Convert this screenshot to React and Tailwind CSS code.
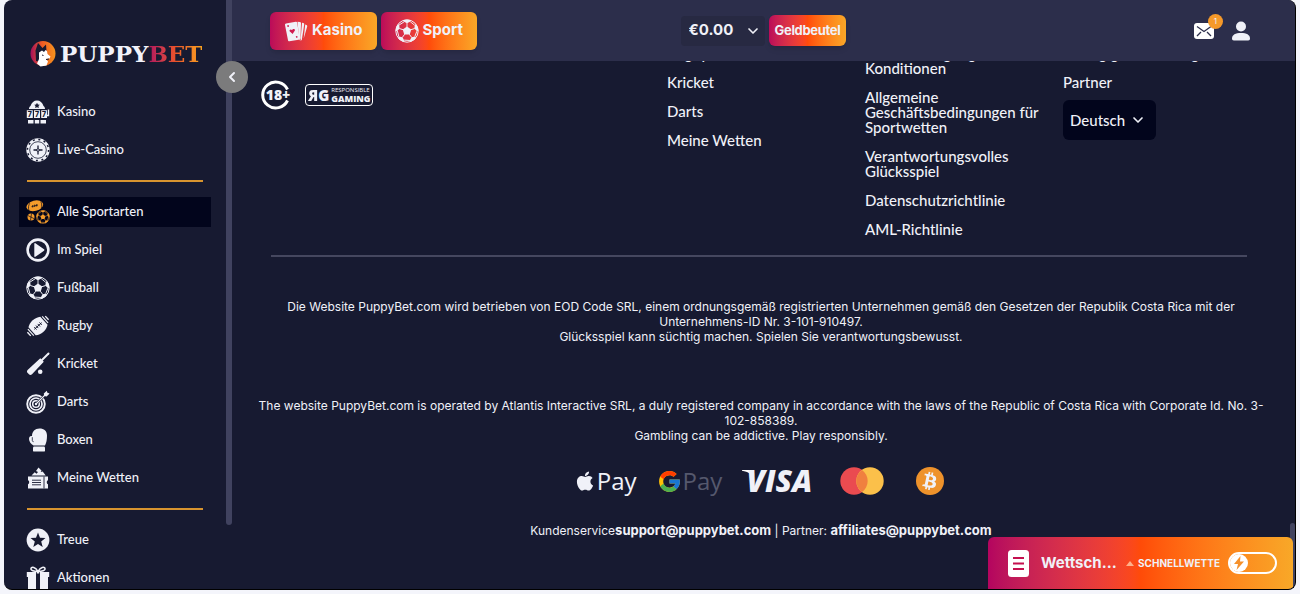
import React, { useState } from "react";
import { ChevronDown, ChevronLeft } from "lucide-react";
import { FaApple, FaBtc } from "react-icons/fa";
import { FcGoogle } from "react-icons/fc";

const Icon = ({ children, className = "size-6" }) => (
  <svg viewBox="0 0 24 24" fill="currentColor" className={`shrink-0 ${className}`} aria-hidden="true">
    {children}
  </svg>
);

const SlotIcon = () => (
  <Icon>
    <path d="M3 9c0-1.500.6-2.500 1.500-3C5.500 2.500 8 .5 11 .5S16.500 2.500 17.500 6c.9.5 1.500 1.500 1.500 3z" />
    <path d="M.8 10.200h6v7.800h-6zM8 10.200h6v7.800H8zM15.200 10.200h5.800v7.800h-5.800zM2 20h5.500v3.500H2zM8.800 20h4.400v3.500H8.800zM14.500 20H20v3.500h-5.500z" />
    <path d="M20.500 15.500h2V9.500" stroke="currentColor" strokeWidth="1.400" fill="none" />
    <path d="M11 2.800l.9 1.700 1.900.3-1.300 1.300.3 1.900-1.800-.8-1.800.8.3-1.900-1.300-1.300 1.900-.3z" fill="#171a31" />
    <g fill="#171a31" fontSize="7" fontWeight="800" fontFamily="Inter, sans-serif" textAnchor="middle">
      <text x="3.800" y="16.600">7</text>
      <text x="11" y="16.600">7</text>
      <text x="18" y="16.600">7</text>
    </g>
  </Icon>
);

const ChipIcon = () => (
  <Icon>
    <circle cx="12" cy="12" r="11.700" />
    <circle cx="12" cy="12" r="10.600" fill="none" stroke="#171a31" strokeWidth="1.500" strokeDasharray="2 3.550" />
    <circle cx="12" cy="12" r="8.300" fill="none" stroke="#171a31" strokeWidth=".8" />
    <path d="M12 7.500v9M7.500 12h9" stroke="#171a31" strokeWidth="1.300" />
    <circle cx="12" cy="12" r="1.600" fill="#171a31" />
    <circle cx="12" cy="12" r=".8" />
  </Icon>
);

const BallShape = () => (
  <>
    <circle cx="12" cy="12" r="11.200" fill="none" stroke="currentColor" strokeWidth="1" />
    <path d="M12 7.500l4.300 3.100-1.600 5H9.300l-1.600-5z" />
    {[0, 72, 144, 216, 288].map((angle) => (
      <g key={angle} transform={`rotate(${angle} 12 12)`}>
        <path d="M12 4.300L8.600 2.600l.2-1.500c2-.6 4.400-.6 6.400 0l.2 1.500z" />
        <path d="M12 8V4M15.200 2.600l4.500 3.700" fill="none" stroke="currentColor" strokeWidth=".9" />
      </g>
    ))}
  </>
);

const BallIcon = ({ className }) => (
  <Icon className={className}>
    <BallShape />
  </Icon>
);

const AllSportsIcon = () => (
  <Icon className="size-6 text-[#f59c2b]">
    <ellipse cx="8.800" cy="5.800" rx="8.500" ry="5.200" transform="rotate(-14 8.800 5.800)" />
    <path d="M3 10.800C2 8 2.500 5 3.800 3.200M15.300 8c.7-1.800.6-4.200-.5-6.400" stroke="#02051c" strokeWidth=".7" fill="none" />
    <path d="M5.500 6.600l6.500-1.600M6.700 5.100v2.400M8.700 4.600V7M10.700 4.100v2.400" stroke="#02051c" strokeWidth=".7" />
    <circle cx="5" cy="17" r="3.500" />
    <path d="M2 15.600l6 3M5.500 13.500l-1 7" stroke="#02051c" strokeWidth=".7" />
    <g transform="translate(10 10) scale(.58)">
      <BallShape />
    </g>
  </Icon>
);

const PlayIcon = () => (
  <Icon>
    <circle cx="12" cy="12" r="10.400" fill="none" stroke="currentColor" strokeWidth="2.600" />
    <path d="M8.300 5.800c0-.6.6-.9 1.100-.6L18 11.300c.5.400.5 1 0 1.400l-8.600 6.100c-.5.300-1.100 0-1.100-.6z" />
  </Icon>
);

const RugbyIcon = () => (
  <Icon>
    <g transform="rotate(-42 12 12)">
      <path d="M4 6.600c4.500-3.300 11.500-3.300 16 0v10.800c-4.500 3.300-11.500 3.300-16 0z" />
      <path d="M2.400 7.600v8.800M21.600 7.600v8.800" stroke="currentColor" strokeWidth="1.200" />
      <path d="M0 9.500v5M24 9.500v5" stroke="currentColor" strokeWidth="1.400" />
      <path d="M7 12h10M8.500 10.300v3.400M10.800 10.300v3.400M13.200 10.300v3.400M15.500 10.300v3.400" stroke="#171a31" strokeWidth=".9" />
    </g>
  </Icon>
);

const CricketIcon = () => (
  <Icon>
    <path d="M22.500 1.500L16 8" stroke="currentColor" strokeWidth="2" strokeLinecap="round" />
    <path d="M14.300 6.200l3.500 3.500L6 22.200c-.8.800-2 .9-2.800.3l-1.700-1.700c-.8-.8-.7-2 .1-2.800z" />
    <circle cx="14.200" cy="19.800" r="2.300" />
  </Icon>
);

const DartsIcon = () => (
  <Icon>
    <g fill="none" stroke="currentColor">
      <circle cx="10" cy="14" r="8.800" strokeWidth="1.900" />
      <circle cx="10" cy="14" r="6" strokeWidth="1.700" />
      <circle cx="10" cy="14" r="3.300" strokeWidth="1.500" />
      <path d="M10 14l9-9" stroke="#171a31" strokeWidth="2.400" />
      <path d="M10 14L20.500 3.500" strokeWidth="1.100" />
    </g>
    <circle cx="10" cy="14" r="1.200" />
    <path d="M17.800 3.500L20.800.8l.6 2 2.200.6-3 3-2.400-.5z" />
  </Icon>
);

const BoxingIcon = () => (
  <Icon>
    <path d="M7.500 17.500c-2.500-1.500-4.500-4-4.500-6.500C3 8.800 4.500 7.600 6 8.200 6 3.500 9 .5 13.500.5S21 3 21 7.500c0 4-.5 7-2 10z" />
    <path d="M6.300 9.200v3.300c0 .8.500 1.200 1.300 1.200" stroke="#171a31" strokeWidth=".8" fill="none" />
    <rect x="7" y="18.600" width="12" height="5" rx="1.200" />
  </Icon>
);

const TicketIcon = () => (
  <Icon>
    <path d="M5.500 9.500l3.200-3.200 1.800 1.500L12 6l-2-1 2.500-3.500 3 3-.8 1.500 2-.4 3 3.900z" />
    <path d="M2 10.500h20v3.800c-1.600.4-1.600 3.500 0 3.900V22.500H2v-4.300c1.600-.4 1.600-3.500 0-3.900z" />
    <path d="M18 10.500v12M6 14.200h9M6 16.500h9M6 18.800h9" stroke="#171a31" strokeWidth=".9" />
  </Icon>
);

const StarIcon = () => (
  <Icon>
    <circle cx="12" cy="12" r="11.400" />
    <path d="M12 4.500l2 5.200 5.500.3-4.300 3.500 1.500 5.400-4.700-3-4.700 3 1.500-5.400L4.500 10l5.500-.3z" fill="#171a31" />
  </Icon>
);

const GiftIcon = () => (
  <Icon>
    <path d="M12 5.500C8 5.500 4.500 4.500 5 2.500s4.500-1.800 7 3c2.500-4.800 6.500-5 7-3s-3 3-7 3z" fill="none" stroke="currentColor" strokeWidth="1.500" />
    <path d="M.8 6H10v5H.8zM14 6h9.200v5H14zM2 11h8v13H2zM14 11h8v13h-8zM10.800 6h2.400v1.500h-2.400z" />
  </Icon>
);

const CardsIcon = () => (
  <Icon className="size-6">
    <path d="M13.500 2.800l2.300.1c.8 0 1.200.6 1.200 1.300l-.5 15-1.200 2.300zM18 3.800l1.300.3c.7.200 1 .8.9 1.500L17.800 21l-1.300.8zM21.200 5.500l1.300.5c.6.300.9.900.7 1.500l-3.500 12z" />
    <path d="M2 4.500l9.800-1.700c.7-.1 1.300.3 1.400 1l2.400 15.500c.1.700-.3 1.300-1 1.400L5.400 22.200c-.7.100-1.300-.3-1.400-1L1 5.900c-.1-.7.300-1.300 1-1.400z" />
    <path d="M8.600 15l-2.700-2.400c-1.200-1.200.5-3 2.100-1.500 1-2 3.400-1.200 2.900.5z" fill="#d01a50" />
    <path d="M3.200 6.300l1.500-.2.300 1.600-1.500.2zM11.800 17.200l1.500-.2.300 1.600-1.500.2z" fill="#d01a50" />
  </Icon>
);

const Logo = () => (
  <a href="#" className="flex items-center gap-[3px]" aria-label="PuppyBet">
    <svg viewBox="0 0 28 28" className="size-7 shrink-0" aria-hidden="true">
      <defs>
        <linearGradient id="disc">
          <stop offset="0" stopColor="#a30f5c" />
          <stop offset=".45" stopColor="#ee5a24" />
          <stop offset="1" stopColor="#f7941d" />
        </linearGradient>
      </defs>
      <circle cx="14" cy="13.500" r="12.500" fill="url(#disc)" />
      <path d="M7 21L6.500 10.500 9 3l4.500 5 3.500-3.500.5 7-3 3.500-3 2 1 5z" fill="#171a31" />
      <path d="M10 12.500l3-2 2 1.500 1.500-2 1.500 1 .5 3 3 2.500-1 2-3.500.5 2 2.500-1.500 4-6 1-3.500-3 2-4.500z" fill="#fff" />
      <path d="M13 15l1.500.5M17 19.500l3-.5" stroke="#171a31" strokeWidth="1" />
    </svg>
    <span className="font-['DejaVu_Serif',serif] text-[23px] leading-7 font-bold text-[#f1f2fa]">
      PUPPY
      <span className="bg-linear-to-r from-[#b0125c] via-[#e8502a] to-[#f9a11f] bg-clip-text text-transparent">BET</span>
    </span>
  </a>
);

const navGroups = [
  [
    { label: "Kasino", icon: SlotIcon },
    { label: "Live-Casino", icon: ChipIcon },
  ],
  [
    { label: "Alle Sportarten", icon: AllSportsIcon, active: true },
    { label: "Im Spiel", icon: PlayIcon },
    { label: "Fußball", icon: BallIcon },
    { label: "Rugby", icon: RugbyIcon },
    { label: "Kricket", icon: CricketIcon },
    { label: "Darts", icon: DartsIcon },
    { label: "Boxen", icon: BoxingIcon },
    { label: "Meine Wetten", icon: TicketIcon },
  ],
  [
    { label: "Treue", icon: StarIcon },
    { label: "Aktionen", icon: GiftIcon },
  ],
];

const footerColumns = [
  ["Rugby", "Kricket", "Darts", "Meine Wetten"],
  [
    "Bonusbedingungen und Konditionen",
    "Allgemeine Geschäftsbedingungen für Sportwetten",
    "Verantwortungsvolles Glücksspiel",
    "Datenschutzrichtlinie",
    "AML-Richtlinie",
  ],
  ["Häufig gestellte Fragen", "Partner"],
];

const Sidebar = () => (
  <aside className="relative z-20 flex w-[228px] shrink-0">
    <div className="min-w-0 flex-1 overflow-hidden px-[15px] pt-10">
      <div className="pl-[10px]">
        <Logo />
      </div>
      <nav className="mt-[29px] flex flex-col gap-2">
        {navGroups.map((group, i) => (
          <React.Fragment key={i}>
            {i > 0 && <hr className="mx-2 my-[7px] border-t-2 border-[#d8942f]" />}
            {group.map(({ label, icon: ItemIcon, active }) => (
              <a
                key={label}
                href="#"
                className={`flex h-[30px] shrink-0 items-center gap-[7px] px-[7px] text-[13px] font-medium ${
                  active ? "bg-[#02051c]" : ""
                }`}
              >
                <ItemIcon />
                {label}
              </a>
            ))}
          </React.Fragment>
        ))}
      </nav>
    </div>
    <div className="mb-16 w-[6px] rounded-b-full bg-[#40425f]" />
    <button
      type="button"
      aria-label="Menü einklappen"
      className="absolute top-[61px] -right-4 flex size-8 items-center justify-center rounded-full bg-[#7b7b7c]"
    >
      <ChevronLeft size={16} strokeWidth={3} />
    </button>
  </aside>
);

const Header = () => (
  <header className="relative z-10 grid h-[61px] shrink-0 grid-cols-[1fr_auto_1fr] items-center bg-[#2c2e4b] font-['Inter',sans-serif]">
    <div className="flex gap-1 pl-[38px]">
      <button
        type="button"
        className="flex h-[38px] items-center gap-1 rounded-md bg-linear-to-r from-[#bb0a59] via-[#ff4b0b] to-[#f9a727] px-[14px] text-[15px] font-bold shadow-md"
      >
        <CardsIcon />
        Kasino
      </button>
      <button
        type="button"
        className="flex h-[38px] items-center gap-1 rounded-md bg-linear-to-r from-[#bb0a59] via-[#ff4b0b] to-[#f9a727] px-[14px] text-[15px] font-bold shadow-md"
      >
        <BallIcon />
        Sport
      </button>
    </div>
    <div className="flex items-center gap-1">
      <div className="relative">
        <select
          aria-label="Guthaben"
          className="h-[30px] w-[84px] appearance-none rounded-sm bg-[#272942] pl-2 text-[15px] font-bold"
        >
          <option>€0.00</option>
        </select>
        <ChevronDown size={16} strokeWidth={2.5} className="pointer-events-none absolute top-[7px] right-1" />
      </div>
      <button
        type="button"
        className="h-[31px] rounded-md bg-linear-to-r from-[#bb0a59] via-[#ff4b0b] to-[#f9a727] px-[6px] text-[13px] font-bold tracking-tight shadow-md"
      >
        Geldbeutel
      </button>
    </div>
    <div className="flex items-center justify-end gap-4 pr-11">
      <button type="button" aria-label="Nachrichten" className="relative">
        <svg viewBox="0 0 22 18" className="h-[18px] w-[22px]" aria-hidden="true">
          <rect x="1" y="1" width="20" height="16" rx="3" fill="#fff" />
          <path d="M4 4.500l7 5 7-5M4 14l4-4M18 14l-4-4" fill="none" stroke="#2c2e4b" strokeWidth="1.300" />
        </svg>
        <span className="absolute -top-2 -right-2 flex size-[15px] items-center justify-center rounded-full bg-[#f5992a] text-[8px] leading-none">
          1
        </span>
      </button>
      <button type="button" aria-label="Konto">
        <svg viewBox="0 0 20 20" fill="currentColor" className="size-5" aria-hidden="true">
          <circle cx="10" cy="5.500" r="5" />
          <path d="M1 17.500C1 13.800 4.500 12 10 12s9 1.800 9 5.500c0 1.300-.6 2-1.800 2H2.800C1.600 19.500 1 18.800 1 17.500z" />
        </svg>
      </button>
    </div>
  </header>
);

const AgeBadges = () => (
  <div className="col-span-2 mt-[35px] -ml-[10px] flex h-7 items-center gap-[14px]">
    <div className="relative flex size-[30px] items-center justify-center">
      <svg viewBox="0 0 30 30" className="absolute inset-0" aria-hidden="true">
        <path d="M26.500 9.500A13 13 0 1 0 26.500 20.500" fill="none" stroke="#fff" strokeWidth="3" />
      </svg>
      <span className="relative pl-1 font-['Open_Sans',sans-serif] text-sm leading-none font-extrabold">18+</span>
    </div>
    <div className="flex h-[22px] items-center gap-[2px] rounded-sm border border-white px-[2px] font-['Open_Sans',sans-serif] font-extrabold">
      <span className="flex text-[15px] leading-none">
        <span className="-scale-x-100">R</span>
        <span>G</span>
      </span>
      <span className="flex flex-col">
        <span className="text-[6px] leading-[8px] font-normal">RESPONSIBLE</span>
        <span className="text-[9px] leading-[10px]">GAMING</span>
      </span>
    </div>
  </div>
);

const Payments = () => (
  <div className="mt-6 flex h-7 items-center justify-center gap-5 pr-1">
    <span className="flex items-center gap-px font-['Open_Sans',sans-serif] text-2xl leading-7 font-medium">
      <FaApple size={22} />
      Pay
    </span>
    <span className="flex items-center gap-px font-['Open_Sans',sans-serif] text-2xl leading-7 font-medium text-[#55586d]">
      <FcGoogle size={25} />
      Pay
    </span>
    <span className="flex items-center font-['Open_Sans',sans-serif] text-[30px] leading-7 font-extrabold italic">
      <svg viewBox="0 0 12 22" className="-mr-2 h-[22px] w-3" aria-hidden="true">
        <path d="M0 0h12v10C10.500 4.500 6 1.600 0 .8z" fill="#fff" />
      </svg>
      VISA
    </span>
    <svg viewBox="0 0 44 28" className="ml-2 h-7 w-11" aria-label="Mastercard">
      <circle cx="14" cy="14" r="13.700" fill="#ea4b50" />
      <circle cx="30" cy="14" r="13.700" fill="#fbc04a" />
      <path d="M22 2.900a13.700 13.700 0 0 1 0 22.200 13.700 13.700 0 0 1 0-22.200z" fill="#f0803f" />
    </svg>
    <span className="ml-3 flex size-7 items-center justify-center rounded-full bg-[#ee922b]">
      <FaBtc size={18} className="rotate-12" />
    </span>
  </div>
);

const Footer = () => (
  <footer className="min-w-0 flex-1 px-[39px]">
    <div className="-mt-[15px] grid grid-cols-5 gap-x-[10px]">
      <AgeBadges />
      {footerColumns.map((links, i) => (
        <div key={i} className="flex flex-col items-start gap-[14px] text-[15px] leading-[15px] font-medium">
          {links.map((link) => (
            <a key={link} href="#">
              {link}
            </a>
          ))}
          {i === 2 && (
            <div className="relative -mt-1">
              <select
                aria-label="Sprache"
                className="h-10 w-[93px] appearance-none rounded-md bg-[#02051c] pl-[7px] text-[15px] font-medium"
              >
                <option>Deutsch</option>
              </select>
              <ChevronDown size={16} strokeWidth={2.5} className="pointer-events-none absolute top-3 right-[10px]" />
            </div>
          )}
        </div>
      ))}
    </div>
    <hr className="mt-[18px] mr-1 border-t-2 border-[#45475f]" />
    <div className="-mx-4 mt-[42px] text-center font-['Inter',sans-serif] text-[12px] leading-[15px]">
      <p>
        Die Website PuppyBet.com wird betrieben von EOD Code SRL, einem ordnungsgemäß registrierten Unternehmen gemäß
        den Gesetzen der Republik Costa Rica mit der Unternehmens-ID Nr. 3-101-910497.
        <br />
        Glücksspiel kann süchtig machen. Spielen Sie verantwortungsbewusst.
      </p>
      <p className="mt-[54px]">
        The website PuppyBet.com is operated by Atlantis Interactive SRL, a duly registered company in accordance with
        the laws of the Republic of Costa Rica with Corporate Id. No. 3-
        <wbr />
        102-858389.
        <br />
        Gambling can be addictive. Play responsibly.
      </p>
    </div>
    <Payments />
    <p className="mt-7 text-center font-['Inter',sans-serif] text-[12px] leading-[15px]">
      Kundenservice
      <a href="mailto:support@puppybet.com" className="text-[13px] font-bold">
        support@puppybet.com
      </a>{" "}
      | Partner:{" "}
      <a href="mailto:affiliates@puppybet.com" className="text-[13px] font-bold">
        affiliates@puppybet.com
      </a>
    </p>
  </footer>
);

const BetSlip = () => {
  const [quick, setQuick] = useState(false);

  return (
    <div className="absolute right-[2px] bottom-0 z-30 flex h-[52px] w-[305px] items-center rounded-t-md bg-linear-to-r from-[#b4045f] via-[#ff4b08] to-[#f8a828] px-5 font-['Inter',sans-serif] font-bold">
      <button type="button" className="flex min-w-0 flex-1 items-center gap-3 text-left">
        <svg viewBox="0 0 21 27" className="h-[27px] w-[21px] shrink-0" aria-hidden="true">
          <rect width="21" height="27" rx="3.500" fill="#fff" />
          <path d="M5 8h11M5 13.500h11M5 19h11" stroke="#c4104f" strokeWidth="2" />
        </svg>
        <span className="w-20 truncate text-[15px]">Wettschein</span>
      </button>
      <svg viewBox="0 0 8 5" className="mr-1 h-[5px] w-2 shrink-0" aria-hidden="true">
        <path d="M4 0l4 5H0z" fill="#ffb08a" />
      </svg>
      <label htmlFor="quick-bet" className="mr-2 shrink-0 text-[10px]">
        SCHNELLWETTE
      </label>
      <span className="relative -mr-1 h-[22px] w-[49px] shrink-0">
        <input
          id="quick-bet"
          type="checkbox"
          checked={quick}
          onChange={(e) => setQuick(e.target.checked)}
          className="block h-[22px] w-[49px] appearance-none rounded-full border-2 border-white"
        />
        <span className="pointer-events-none absolute top-[2px] left-[2px] flex size-[18px] items-center justify-center rounded-full bg-white">
          <svg viewBox="0 0 12 14" className="h-[14px] w-3" aria-hidden="true">
            <path d="M7.500 0L1 8h4l-1.500 6L11 5.500H7z" fill="#f6902a" />
          </svg>
        </span>
      </span>
    </div>
  );
};

const App = () => (
  <div className="h-screen bg-[#f4f5fb] pr-1 pb-1 pl-1 font-['Lato',sans-serif] text-[#f0f1f8]">
    <div className="relative flex h-full overflow-hidden rounded-lg border-r border-b border-black bg-[#171a31]">
      <Sidebar />
      <div className="flex min-w-0 flex-1 flex-col">
        <Header />
        <main className="flex min-h-0 flex-1 overflow-hidden">
          <Footer />
          <div className="flex w-[5px] items-end">
            <div className="h-[66px] w-full rounded-t-full bg-[#40425f]" />
          </div>
        </main>
      </div>
      <BetSlip />
    </div>
  </div>
);

export default App;
